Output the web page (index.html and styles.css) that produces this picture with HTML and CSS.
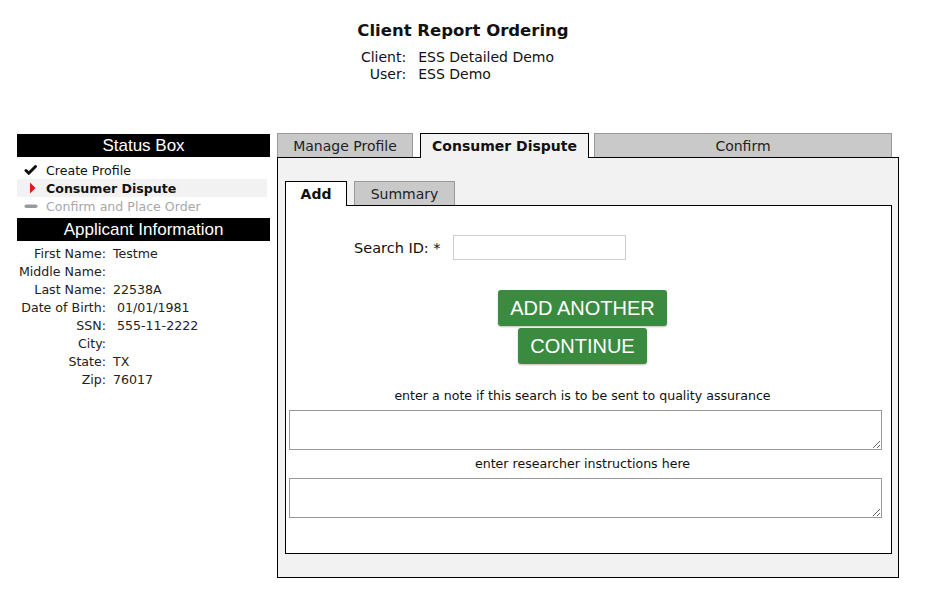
FILE: index.html
```html
<!DOCTYPE html>
<html>
<head>
  <link rel="stylesheet" href="styles.css">
</head>
<body>
  <div class="header">
    <h1>Client Report Ordering</h1>
    <div class="who">
      <span class="who-label">Client:</span><span>ESS Detailed Demo</span>
      <span class="who-label">User:</span><span>ESS Demo</span>
    </div>
  </div>

  <div class="main">
    <div class="sidebar">
      <div class="side-title">Status Box</div>
      <div class="status-list">
        <div class="status-item done">
          <svg class="status-icon" width="14" height="12" viewBox="0 0 14 12">
            <path d="M2 6.5 L4.8 9.3 L11.5 2.5" fill="none" stroke="#111" stroke-width="3" stroke-linecap="round" stroke-linejoin="round"/>
          </svg>
          <span>Create Profile</span>
        </div>
        <div class="status-item current">
          <svg class="status-icon" width="14" height="12" viewBox="0 0 14 12">
            <path d="M6 0.5 L11.5 6 L6 11.5 Z" fill="#e8141c"/>
          </svg>
          <span>Consumer Dispute</span>
        </div>
        <div class="status-item todo">
          <svg class="status-icon" width="14" height="12" viewBox="0 0 14 12">
            <rect x="0.5" y="4.5" width="13" height="3.5" rx="1.75" fill="#9a9a9a"/>
          </svg>
          <span>Confirm and Place Order</span>
        </div>
      </div>

      <div class="side-title">Applicant Information</div>
      <div class="applicant">
        <span class="app-label">First Name:</span><span>Testme</span>
        <span class="app-label">Middle Name:</span><span></span>
        <span class="app-label">Last Name:</span><span>22538A</span>
        <span class="app-label">Date of Birth:</span><span>&nbsp;01/01/1981</span>
        <span class="app-label">SSN:</span><span>&nbsp;555-11-2222</span>
        <span class="app-label">City:</span><span></span>
        <span class="app-label">State:</span><span>TX</span>
        <span class="app-label">Zip:</span><span>76017</span>
      </div>
    </div>

    <div class="content">
      <div class="tabs">
        <div class="tab tab-profile">Manage Profile</div>
        <div class="tab tab-dispute active">Consumer Dispute</div>
        <div class="tab tab-confirm">Confirm</div>
      </div>
      <div class="panel">
        <div class="subtabs">
          <div class="subtab subtab-add active">Add</div>
          <div class="subtab subtab-summary">Summary</div>
        </div>
        <div class="subpanel">
          <div class="search-row">
            <label class="search-label" for="searchId">Search ID: *</label>
            <input type="text" id="searchId" class="search-input">
          </div>

          <div class="actions">
            <button class="btn-green">ADD ANOTHER</button>
            <button class="btn-green">CONTINUE</button>
          </div>

          <div class="note-label">enter a note if this search is to be sent to quality assurance</div>
          <textarea class="note"></textarea>

          <div class="note-label">enter researcher instructions here</div>
          <textarea class="note"></textarea>
        </div>
      </div>
    </div>
  </div>
</body>
</html>
```

FILE: styles.css
```css
:root {
  --text-color: #111;
  --tab-gray: #c9c9c9;
  --panel-bg: #f2f2f2;
  --green: #3a8b40;
}

body {
  margin: 0;
  font-family: 'DejaVu Sans', Verdana, sans-serif;
  font-size: 12.6px;
  color: var(--text-color);
  background: white;
}

.header {
  text-align: center;
  padding-top: 22px;
}

.header h1 {
  font-size: 16.5px;
  font-weight: bold;
  margin: 0 0 9px 0;
  padding-right: 7px;
  line-height: 18px;
}

.who {
  display: grid;
  grid-template-columns: auto auto;
  justify-content: center;
  column-gap: 12px;
  padding-right: 18px;
  font-size: 14px;
  line-height: 17px;
  text-align: left;
}

.who-label {
  text-align: right;
}

.main {
  display: flex;
  gap: 7px;
  padding-left: 17px;
  margin-top: 50px;
}

/* Left column */
.sidebar {
  width: 253px;
  flex-shrink: 0;
  padding-top: 1px;
}

.side-title {
  background: #000;
  color: white;
  font-family: 'Liberation Sans', Arial, sans-serif;
  font-size: 17px;
  text-align: center;
  height: 23px;
  line-height: 23px;
}

.status-list {
  padding: 4px 0 3px 0;
}

.status-item {
  display: flex;
  align-items: center;
  height: 18px;
  width: 250px;
  padding-left: 7px;
  box-sizing: border-box;
}

.status-icon {
  margin-right: 8px;
  flex-shrink: 0;
}

.status-item.current {
  background: #f2f2f2;
  font-weight: bold;
}

.status-item.todo {
  color: #a8a8a8;
}

.applicant {
  display: grid;
  grid-template-columns: 89px auto;
  column-gap: 7px;
  padding-top: 4px;
  line-height: 18px;
  color: #222;
}

.app-label {
  text-align: right;
}

/* Right column */
.content {
  width: 622px;
}

.tabs {
  display: flex;
  align-items: flex-end;
  height: 24px;
}

.tab {
  height: 24px;
  box-sizing: border-box;
  background: var(--tab-gray);
  border: 1px solid #999;
  border-bottom: none;
  text-align: center;
  font-size: 14px;
  line-height: 24px;
  color: #222;
}

.tab.active {
  background: var(--panel-bg);
  border-color: #000;
  font-weight: bold;
  height: 25px;
  margin-bottom: -1px;
  position: relative;
  color: var(--text-color);
}

.tab-profile {
  width: 136px;
}

.tab-dispute {
  width: 169px;
  margin-left: 7px;
}

.tab-confirm {
  width: 298px;
  margin-left: 5px;
}

.panel {
  background: var(--panel-bg);
  border: 1px solid #000;
  padding: 23px 6px 23px 7px;
  height: 421px;
  box-sizing: border-box;
}

.subtabs {
  display: flex;
  align-items: flex-end;
  height: 24px;
}

.subtab {
  height: 24px;
  box-sizing: border-box;
  background: var(--tab-gray);
  border: 1px solid #999;
  border-bottom: none;
  text-align: center;
  font-size: 14px;
  line-height: 25px;
  color: #222;
}

.subtab.active {
  background: white;
  border-color: #000;
  font-weight: bold;
  height: 25px;
  margin-bottom: -1px;
  position: relative;
  color: var(--text-color);
}

.subtab-add {
  width: 62px;
}

.subtab-summary {
  width: 101px;
  margin-left: 7px;
}

.subpanel {
  background: white;
  border: 1px solid #000;
  height: 349px;
  box-sizing: border-box;
  padding: 29px 14px 0 2px;
}

.search-row {
  display: flex;
  align-items: center;
  gap: 12px;
  padding-left: 66px;
}

.search-label {
  font-size: 14.5px;
}

.search-input {
  width: 173px;
  height: 25px;
  box-sizing: border-box;
  border: 1px solid #ccc;
  padding: 2px 4px;
  font-family: inherit;
}

.actions {
  display: flex;
  flex-direction: column;
  align-items: center;
  gap: 2px;
  margin-top: 30px;
  margin-bottom: 24px;
}

.btn-green {
  background: var(--green);
  color: white;
  border: none;
  border-radius: 3px;
  font-family: 'Liberation Sans', Arial, sans-serif;
  font-size: 20px;
  height: 36px;
  padding: 0 12px;
  box-shadow: 0 1px 2px rgba(0, 0, 0, 0.25);
  cursor: pointer;
}

.note-label {
  text-align: center;
  line-height: 16px;
  margin-bottom: 6px;
}

.note {
  display: block;
  width: 593px;
  height: 40px;
  box-sizing: border-box;
  margin: 0 0 6px 1px;
  border: 1px solid #999;
  font-family: inherit;
  resize: vertical;
}
```
